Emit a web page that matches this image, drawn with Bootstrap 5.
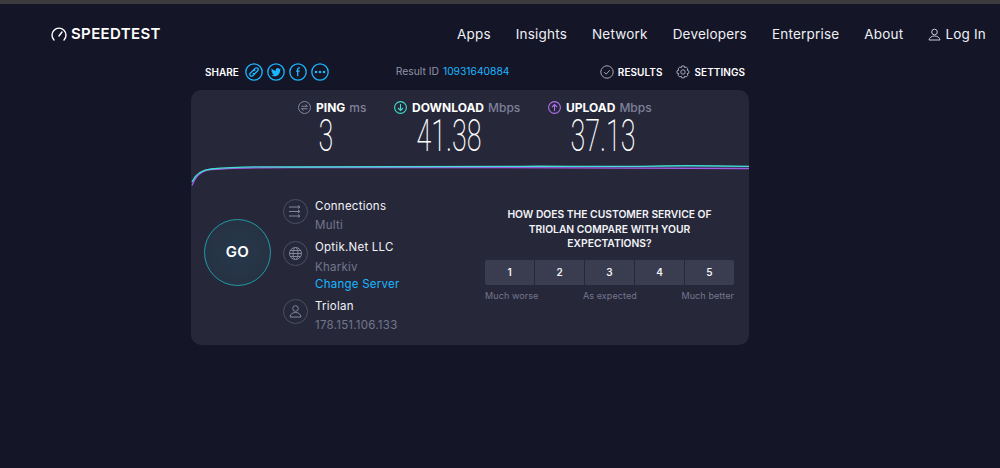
<!DOCTYPE html>
<html lang="en">
  <head>
    <meta charset="UTF-8" />
    <title>Speedtest</title>
    <meta name="viewport" content="width=device-width, initial-scale=1" />
    <link href="https://cdn.jsdelivr.net/npm/bootstrap@5.3.0/dist/css/bootstrap.min.css" rel="stylesheet" />
    <script src="https://cdn.jsdelivr.net/npm/bootstrap@5.3.0/dist/js/bootstrap.bundle.min.js"></script>
    <style>
      html, body { height: 100%; }
      body { background: #141526; color: #fff; font-family: "Inter", "Noto Sans", sans-serif; overflow: hidden; }
      .top-strip { height: 4px; background: #3b3b3d; }
      .st-nav { height: 60px; padding: 0 14px 0 51px; }
      .st-logo { font-size: 15px; font-weight: 600; letter-spacing: .35px; color: #fff; }
      .st-links { gap: 25px; font-size: 13.5px; letter-spacing: .2px; }
      .st-links a { color: #eef0f5; text-decoration: none; }
      .st-wrap { width: 558px; margin-left: 191px; }
      .share-row { height: 26px; font-size: 10px; font-weight: 600; padding: 0 4px 10px 14px; }
      .share-row svg { display: block; }
      .share-label { margin-right: 6px; }
      .result-id { color: #9193a8; font-size: 10.3px; font-weight: 400; margin-left: 67px; }
      .result-id a { color: #1cb6ff; text-decoration: none; margin-left: 4px; }
      .tool-links { gap: 14px; letter-spacing: .05px; }
      .st-card { background: #26283a; border-radius: 10px; height: 255px; }
      .stats { height: 70px; padding-top: 9px; padding-left: 107px; }
      .stat-ping { width: 96px; }
      .stat-down { width: 154px; }
      .stat-head { font-size: 12px; font-weight: 700; height: 17px; white-space: nowrap; }
      .stat-head svg { margin-right: 1px; }
      .stat-head span { color: #7f8199; font-weight: 500; margin-left: 0; }
      .stat-num { font-family: "Roboto", sans-serif; font-weight: 200; font-size: 44px; line-height: 40px; display: block; transform: scaleX(.61); transform-origin: center; text-align: center; }
      .num-ping { width: 56px; }
      .num-speed { width: 110px; }
      .speed-chart { display: block; height: 34px; }
      .lower { padding: 3px 15px 0 13px; }
      .go-btn { width: 67px; height: 67px; border-radius: 50%; border: 1px solid #1f9aa5; background: radial-gradient(circle, #25384c 0%, #27303f 100%); color: #fff; font-size: 15px; font-weight: 600; letter-spacing: .4px; margin-top: 22px; padding: 0; flex: none; }
      .info-col { margin-left: 12px; width: 200px; }
      .info-row { gap: 7px; }
      .info-top { height: 42px; }
      .info-mid { height: 59px; }
      .info-ico { width: 25px; height: 25px; border: 1px solid #4c4e62; border-radius: 50%; flex: none; margin-top: 2px; }
      .info-bot .info-ico { margin-top: 1px; }
      .info-ico svg { display: block; margin: 4px; }
      .info-txt { font-size: 11.5px; letter-spacing: .25px; }
      .info-txt div, .info-txt a { display: block; white-space: nowrap; }
      .info-main { color: #f2f3f7; }
      .info-top .info-main { margin-top: 1px; }
      .info-sub { color: #74768c; margin-top: 2px; }
      .info-mid .info-sub { margin-top: 3px; }
      .info-link { color: #1cb6ff; text-decoration: none; margin-top: -1px; }
      .survey { width: 249px; margin-left: 2px; padding-top: 10px; }
      .survey-q { font-size: 10.3px; font-weight: 600; line-height: 14.6px; text-align: center; color: #f2f3f7; height: 53px; padding: 0 16px; }
      .survey-btns { gap: 1px; }
      .survey-btns button { flex: 1; height: 25px; background: #3a3c4f; color: #f2f3f7; border: 0; font-size: 10px; font-weight: 600; padding: 0; }
      .survey-btns button:first-child { border-radius: 2px 0 0 2px; }
      .survey-btns button:last-child { border-radius: 0 2px 2px 0; }
      .survey-labels { font-size: 9px; color: #74768c; margin-top: 4px; letter-spacing: .1px; }
    </style>
  </head>
  <body>
    <div class="top-strip"></div>
    <nav class="st-nav d-flex align-items-center justify-content-between">
      <a class="st-logo d-flex align-items-center gap-1 text-decoration-none" href="#">
        <svg width="16" height="14" viewBox="0 0 16 14" fill="none" stroke="#fff" stroke-width="1.4" stroke-linecap="round"><path d="M3 13A7 7 0 1 1 13 13"/><path d="M8 9l3-4"/></svg>
        SPEEDTEST
      </a>
      <div class="st-links d-flex align-items-center">
        <a href="#">Apps</a>
        <a href="#">Insights</a>
        <a href="#">Network</a>
        <a href="#">Developers</a>
        <a href="#">Enterprise</a>
        <a href="#">About</a>
        <a href="#" class="d-flex align-items-center gap-1">
          <svg width="13" height="13" viewBox="0 0 13 13" fill="none" stroke="#c9cbd6" stroke-width="1"><circle cx="6.5" cy="4" r="2.8"/><path d="M1 12c.5-2.500 2.500-4 5.500-4s5 1.500 5.500 4z"/></svg>
          Log In
        </a>
      </div>
    </nav>

    <main class="st-wrap">
      <div class="share-row d-flex align-items-center">
        <span class="share-label">SHARE</span>
        <div class="d-flex gap-1">
          <svg width="18" height="18" viewBox="0 0 18 18" fill="none" stroke="#1cb6ff" stroke-width="1.3"><circle cx="9" cy="9" r="8.2"/><path d="M8 7.500l2.200-2.200a1.700 1.700 0 0 1 2.500 2.500l-2.500 2.400a1.700 1.700 0 0 1-2.400 0M10 10.500l-2.200 2.200a1.700 1.700 0 0 1-2.500-2.500l2.500-2.400a1.700 1.700 0 0 1 2.400 0"/></svg>
          <svg width="18" height="18" viewBox="0 0 18 18" fill="none" stroke="#1cb6ff" stroke-width="1.3"><circle cx="9" cy="9" r="8.2"/><path fill="#1cb6ff" stroke="none" d="M14 6.200c-.4.200-.8.300-1.200.3.400-.3.800-.700.900-1.100-.4.200-.9.400-1.300.5a2 2 0 0 0-3.500 1.900C7.200 7.700 5.700 6.900 4.700 5.600c-.6 1-.3 2.100.6 2.700-.3 0-.6-.1-.9-.3 0 1 .7 1.800 1.600 2-.3.1-.6.100-.9 0 .3.800 1 1.400 1.900 1.400-.9.700-2 1-3 .9 3.700 2.200 9.100.6 9.200-5.400.3-.2.600-.5.800-.7z"/></svg>
          <svg width="18" height="18" viewBox="0 0 18 18" fill="none" stroke="#1cb6ff" stroke-width="1.3"><circle cx="9" cy="9" r="8.2"/><path stroke-width="1.300" d="M11 4.800h-.8c-1 0-1.500.6-1.500 1.500V13.300M7 8.200h3.700"/></svg>
          <svg width="18" height="18" viewBox="0 0 18 18" fill="none" stroke="#1cb6ff" stroke-width="1.3"><circle cx="9" cy="9" r="8.2"/><g fill="#1cb6ff" stroke="none"><circle cx="5" cy="9" r="1.300"/><circle cx="9" cy="9" r="1.300"/><circle cx="13" cy="9" r="1.300"/></g></svg>
        </div>
        <div class="result-id">Result ID<a href="#">10931640884</a></div>
        <div class="tool-links ms-auto d-flex align-items-center">
          <span class="d-flex align-items-center gap-1">
            <svg width="14" height="14" viewBox="0 0 14 14" fill="none" stroke="#a6a8b6" stroke-width="1"><circle cx="7" cy="7" r="6.200"/><path d="M4.200 7.200l2 2 3.600-4"/></svg>
            RESULTS
          </span>
          <span class="d-flex align-items-center gap-1">
            <svg width="14" height="14" viewBox="0 0 14 14" fill="none" stroke="#a6a8b6" stroke-width="1"><circle cx="7" cy="7" r="2.200"/><path d="M5.800 1h2.400l.4 1.700 1.600-.7 1.700 1.700-.8 1.500 1.700.6v2.400l-1.700.5.800 1.600-1.700 1.700-1.600-.8-.4 1.700H5.800l-.5-1.700-1.500.8-1.700-1.700.7-1.600L1 8.200V5.800l1.800-.6-.7-1.500L3.800 2l1.500.7z"/></svg>
            SETTINGS
          </span>
        </div>
      </div>

      <section class="st-card">
        <div class="stats d-flex">
          <div class="stat-ping">
            <div class="stat-head d-flex align-items-center gap-1">
              <svg width="13" height="13" viewBox="0 0 13 13" fill="none" stroke="#83859a" stroke-width="1"><circle cx="6.500" cy="6.500" r="6"/><path d="M3.500 5.300h6l-2-1.800M9.500 7.700h-6l2 1.800"/></svg>
              PING<span>ms</span>
            </div>
            <div class="stat-num num-ping">3</div>
          </div>
          <div class="stat-down">
            <div class="stat-head d-flex align-items-center gap-1">
              <svg width="13" height="13" viewBox="0 0 13 13" fill="none" stroke="#3fdccb" stroke-width="1.100"><circle cx="6.500" cy="6.500" r="5.900"/><path d="M6.500 3v6.300M4 7l2.500 2.500L9 7"/></svg>
              DOWNLOAD<span>Mbps</span>
            </div>
            <div class="stat-num num-speed">41.38</div>
          </div>
          <div>
            <div class="stat-head d-flex align-items-center gap-1">
              <svg width="13" height="13" viewBox="0 0 13 13" fill="none" stroke="#b46ff0" stroke-width="1.100"><circle cx="6.500" cy="6.500" r="5.900"/><path d="M6.500 10V3.700M4 6l2.500-2.500L9 6"/></svg>
              UPLOAD<span>Mbps</span>
            </div>
            <div class="stat-num num-speed">37.13</div>
          </div>
        </div>

        <svg class="speed-chart" width="558" height="34" viewBox="0 0 558 34" fill="none" stroke-width="1.300">
          <path stroke="#a05be0" d="M1 25.500C4 17 8 12 16 10 35 8 60 7.500 100 7.500L300 7.500C340 7.500 400 8 558 8.500"/>
          <path stroke="#45dcd3" d="M1 22C4 15 10 10 20 9 40 7 60 6.300 100 7L330 6.300C370 6 400 6.800 450 6.300 480 5.500 510 5.500 558 6.300"/>
        </svg>

        <div class="lower d-flex">
          <button class="go-btn" type="button">GO</button>
          <div class="info-col">
            <div class="info-row info-top d-flex">
              <div class="info-ico">
                <svg width="15" height="15" viewBox="0 0 15 15" fill="none" stroke="#83859a" stroke-width="1"><path d="M1 3h10M1 7.500h10M1 12h10M10 1.500L12 3l-2 1.500M10 6l2 1.500L10 9M10 10.500l2 1.500-2 1.500"/></svg>
              </div>
              <div class="info-txt">
                <div class="info-main">Connections</div>
                <div class="info-sub">Multi</div>
              </div>
            </div>
            <div class="info-row info-mid d-flex">
              <div class="info-ico">
                <svg width="15" height="15" viewBox="0 0 15 15" fill="none" stroke="#83859a" stroke-width="1"><circle cx="7.500" cy="7.500" r="6"/><ellipse cx="7.500" cy="7.500" rx="2.500" ry="6"/><path d="M1.500 7.500h12M2.300 4.500h10.400M2.300 10.500h10.400"/></svg>
              </div>
              <div class="info-txt">
                <div class="info-main">Optik.Net LLC</div>
                <div class="info-sub">Kharkiv</div>
                <a class="info-link" href="#">Change Server</a>
              </div>
            </div>
            <div class="info-row info-bot d-flex">
              <div class="info-ico">
                <svg width="15" height="15" viewBox="0 0 15 15" fill="none" stroke="#83859a" stroke-width="1"><circle cx="7.500" cy="4.500" r="2.800"/><path d="M2 13c.5-3 2.500-4.500 5.500-4.500S12.500 10 13 13z"/></svg>
              </div>
              <div class="info-txt">
                <div class="info-main">Triolan</div>
                <div class="info-sub">178.151.106.133</div>
              </div>
            </div>
          </div>
          <div class="survey">
            <div class="survey-q">HOW DOES THE CUSTOMER SERVICE OF TRIOLAN COMPARE WITH YOUR EXPECTATIONS?</div>
            <div class="survey-btns d-flex">
              <button type="button">1</button>
              <button type="button">2</button>
              <button type="button">3</button>
              <button type="button">4</button>
              <button type="button">5</button>
            </div>
            <div class="survey-labels d-flex justify-content-between">
              <span>Much worse</span>
              <span>As expected</span>
              <span>Much better</span>
            </div>
          </div>
        </div>
      </section>
    </main>
  </body>
</html>
